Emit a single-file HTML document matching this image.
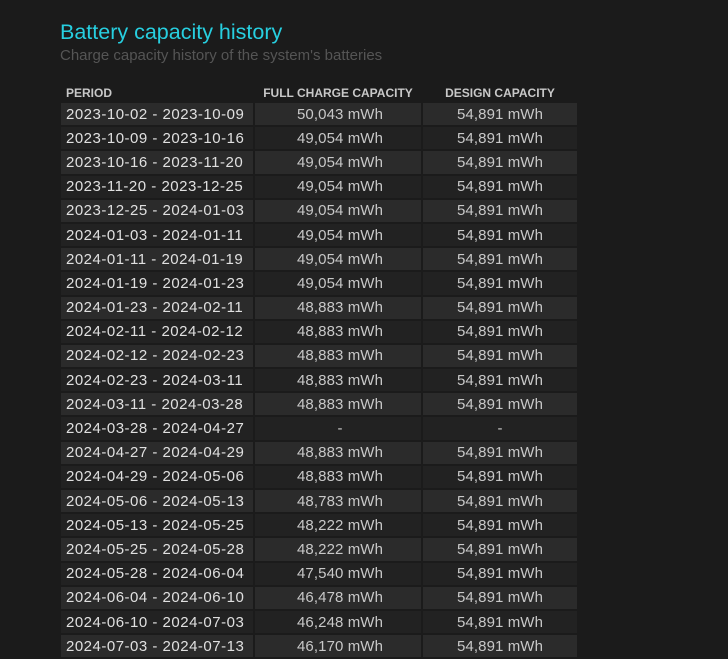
<!DOCTYPE html>
<html><head><style>
body{margin:0;background:#1b1b1b;width:728px;height:653px;overflow:hidden;font-family:"Liberation Sans",sans-serif;}
h1{position:absolute;left:60px;top:20px;margin:0;font-size:21.5px;font-weight:normal;color:#27cfe0;}
.sub{position:absolute;left:60px;top:47px;font-size:15px;color:#555;}
table{position:absolute;left:59px;top:82px;border-spacing:2px;table-layout:fixed;width:520px;}
th{font-size:12px;font-weight:bold;color:#c8c8c8;height:17px;padding:0;text-align:center;}
th:first-child{text-align:left;padding-left:5px;}
td{height:22.2px;padding:0;font-size:15px;letter-spacing:0.1px;color:#c8c8c8;text-align:center;}
td:first-child{text-align:left;padding-left:5px;color:#e0e0e0;letter-spacing:0.5px;}
td:nth-child(2){padding-left:4px}
tr:nth-child(odd) td{background:#2b2b2b}
tr:nth-child(even) td{background:#222}
</style></head><body>
<h1>Battery capacity history</h1>
<div class="sub">Charge capacity history of the system's batteries</div>
<table>
<colgroup><col style="width:192px"><col style="width:166px"><col style="width:154px"></colgroup>
<thead><tr><th>PERIOD</th><th>FULL CHARGE CAPACITY</th><th>DESIGN CAPACITY</th></tr></thead>
<tbody>
<tr><td>2023-10-02 - 2023-10-09</td><td>50,043 mWh</td><td>54,891 mWh</td></tr>
<tr><td>2023-10-09 - 2023-10-16</td><td>49,054 mWh</td><td>54,891 mWh</td></tr>
<tr><td>2023-10-16 - 2023-11-20</td><td>49,054 mWh</td><td>54,891 mWh</td></tr>
<tr><td>2023-11-20 - 2023-12-25</td><td>49,054 mWh</td><td>54,891 mWh</td></tr>
<tr><td>2023-12-25 - 2024-01-03</td><td>49,054 mWh</td><td>54,891 mWh</td></tr>
<tr><td>2024-01-03 - 2024-01-11</td><td>49,054 mWh</td><td>54,891 mWh</td></tr>
<tr><td>2024-01-11 - 2024-01-19</td><td>49,054 mWh</td><td>54,891 mWh</td></tr>
<tr><td>2024-01-19 - 2024-01-23</td><td>49,054 mWh</td><td>54,891 mWh</td></tr>
<tr><td>2024-01-23 - 2024-02-11</td><td>48,883 mWh</td><td>54,891 mWh</td></tr>
<tr><td>2024-02-11 - 2024-02-12</td><td>48,883 mWh</td><td>54,891 mWh</td></tr>
<tr><td>2024-02-12 - 2024-02-23</td><td>48,883 mWh</td><td>54,891 mWh</td></tr>
<tr><td>2024-02-23 - 2024-03-11</td><td>48,883 mWh</td><td>54,891 mWh</td></tr>
<tr><td>2024-03-11 - 2024-03-28</td><td>48,883 mWh</td><td>54,891 mWh</td></tr>
<tr><td>2024-03-28 - 2024-04-27</td><td>-</td><td>-</td></tr>
<tr><td>2024-04-27 - 2024-04-29</td><td>48,883 mWh</td><td>54,891 mWh</td></tr>
<tr><td>2024-04-29 - 2024-05-06</td><td>48,883 mWh</td><td>54,891 mWh</td></tr>
<tr><td>2024-05-06 - 2024-05-13</td><td>48,783 mWh</td><td>54,891 mWh</td></tr>
<tr><td>2024-05-13 - 2024-05-25</td><td>48,222 mWh</td><td>54,891 mWh</td></tr>
<tr><td>2024-05-25 - 2024-05-28</td><td>48,222 mWh</td><td>54,891 mWh</td></tr>
<tr><td>2024-05-28 - 2024-06-04</td><td>47,540 mWh</td><td>54,891 mWh</td></tr>
<tr><td>2024-06-04 - 2024-06-10</td><td>46,478 mWh</td><td>54,891 mWh</td></tr>
<tr><td>2024-06-10 - 2024-07-03</td><td>46,248 mWh</td><td>54,891 mWh</td></tr>
<tr><td>2024-07-03 - 2024-07-13</td><td>46,170 mWh</td><td>54,891 mWh</td></tr>
</tbody></table>
</body></html>
